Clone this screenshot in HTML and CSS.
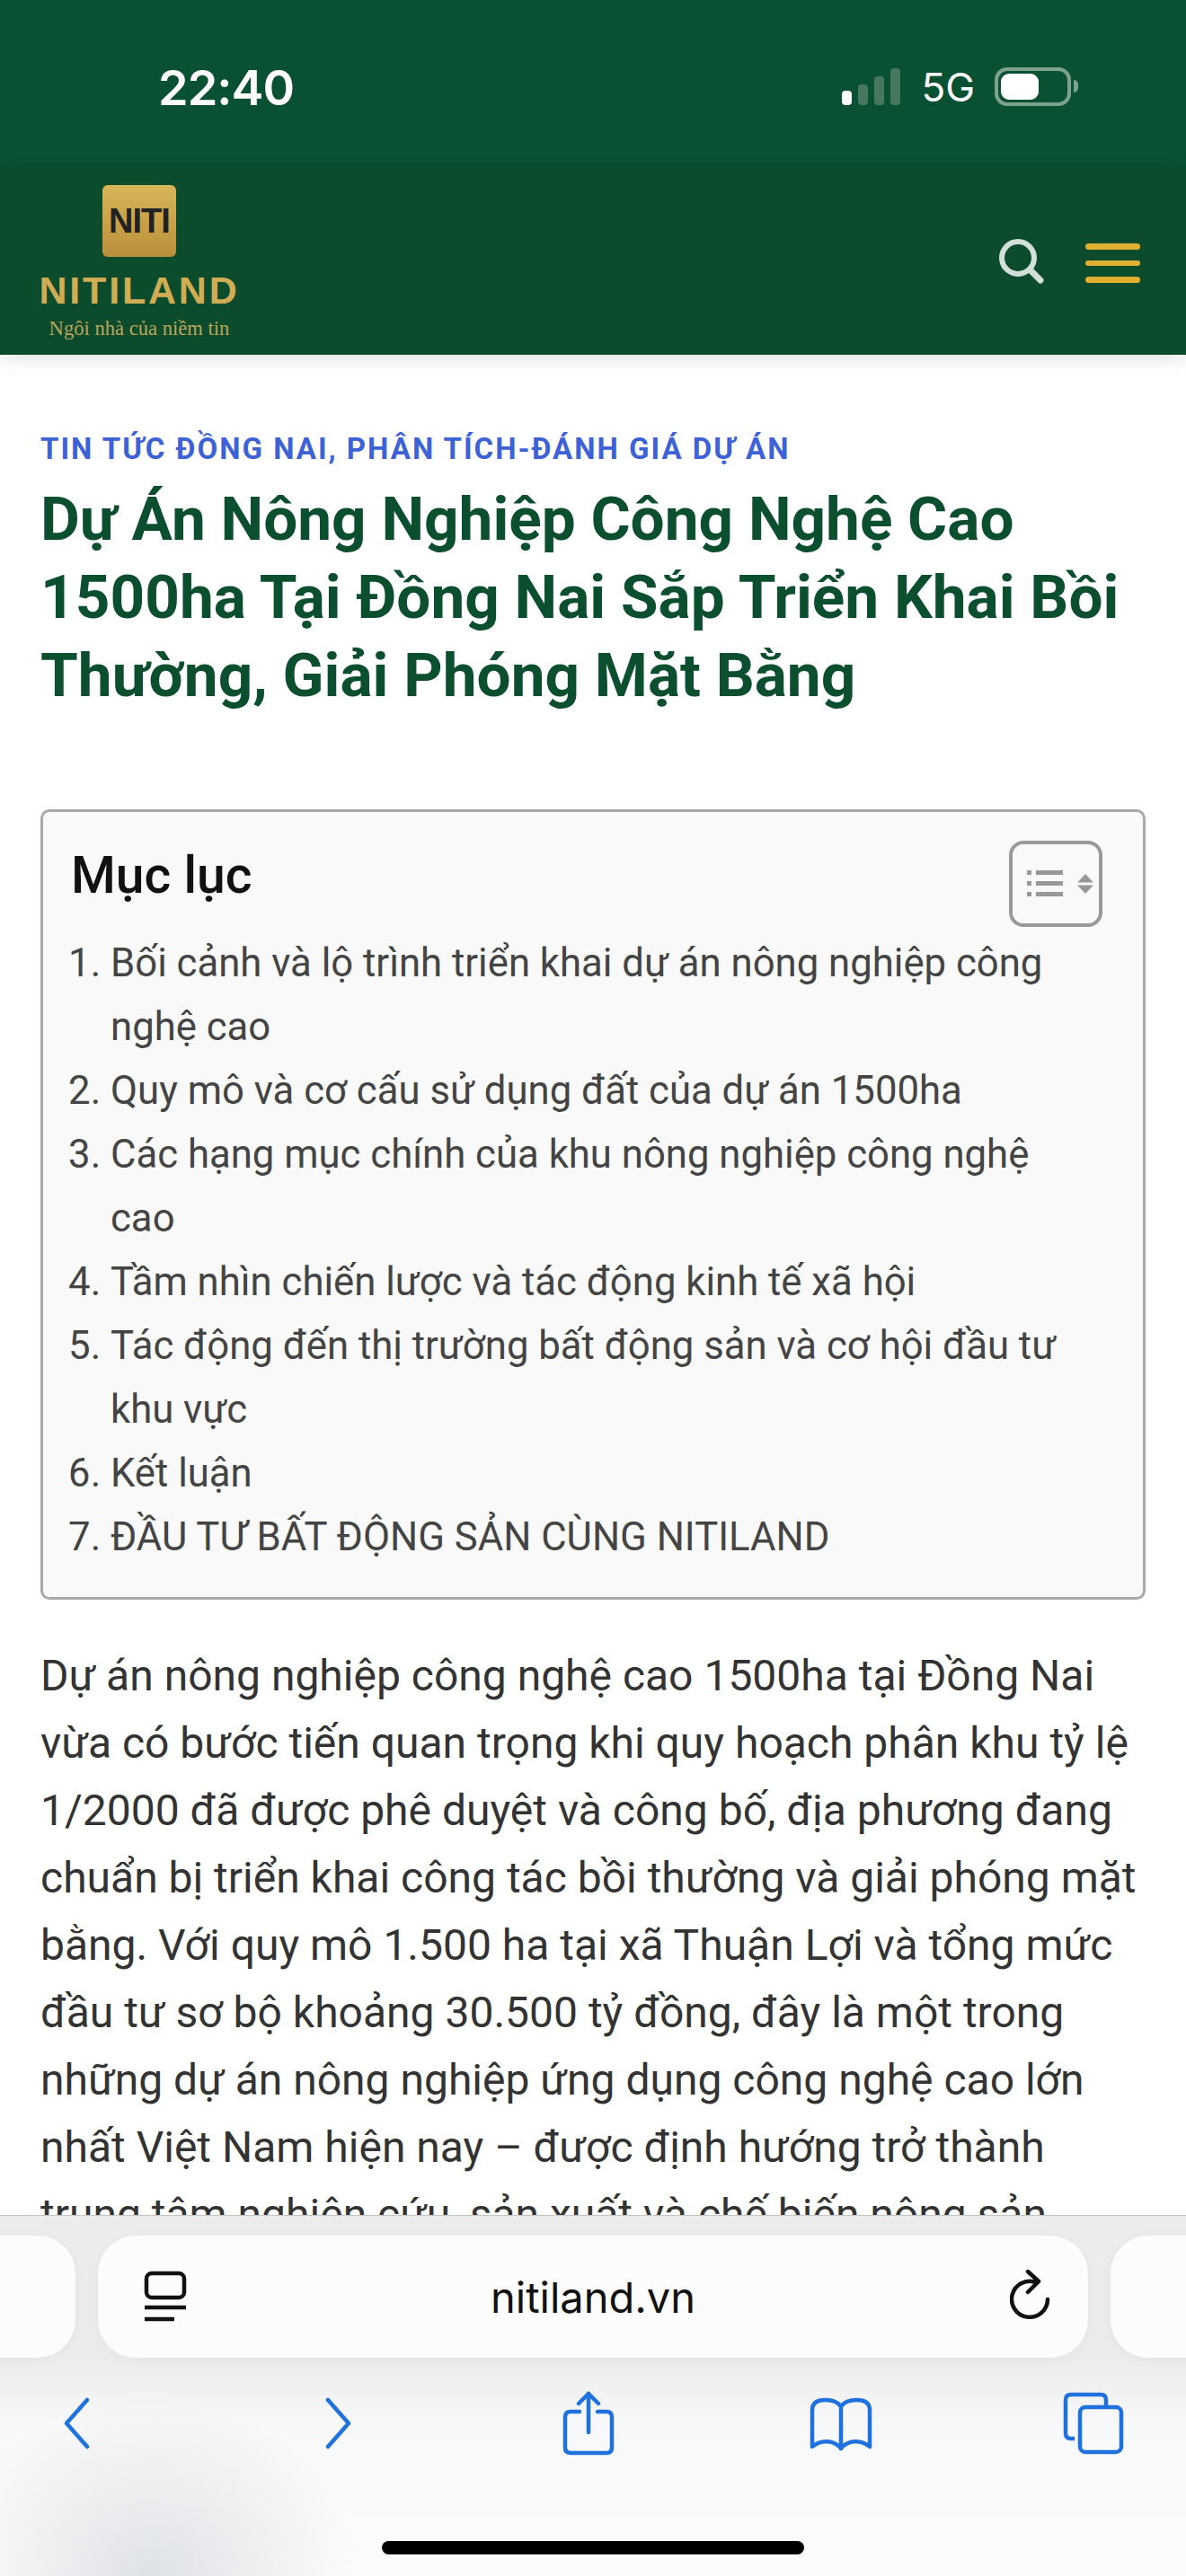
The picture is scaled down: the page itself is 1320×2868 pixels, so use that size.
FILE: index.html
```html
<!DOCTYPE html>
<html lang="vi">
  <head>
    <meta charset="UTF-8" />
    <meta name="viewport" content="width=device-width, initial-scale=1.0" />
    <link rel="stylesheet" href="styles.css">
    <title>Nitiland</title>
  </head>
  <body>
    <div class="screen">
      <div class="status">
        <span class="time">22:40</span>
        <div class="status-right">
          <div class="signal">
            <i class="bar on b1"></i>
            <i class="bar b2"></i>
            <i class="bar b3"></i>
            <i class="bar b4"></i>
          </div>
          <span class="net">5G</span>
          <div class="battery"><i class="level"></i></div>
          <i class="battery-tip"></i>
        </div>
      </div>

      <header class="site-header">
        <div class="logo">
          <div class="logo-box">NITI</div>
          <div class="logo-name">NITILAND</div>
          <div class="logo-tag">Ngôi nhà của niềm tin</div>
        </div>
        <div class="header-icons">
          <svg class="search" width="56" height="56" viewBox="0 0 56 56" fill="none" stroke="#d3e0da" stroke-width="6" stroke-linecap="round">
            <circle cx="24" cy="24" r="18" />
            <path d="M38 38 L49 49" stroke-width="7" />
          </svg>
          <div class="burger">
            <i></i>
            <i></i>
            <i></i>
          </div>
        </div>
      </header>

      <main class="content">
        <div class="cats">TIN TỨC ĐỒNG NAI, PHÂN TÍCH-ĐÁNH GIÁ DỰ ÁN</div>
        <h1 class="title">Dự Án Nông Nghiệp Công Nghệ Cao 1500ha Tại Đồng Nai Sắp Triển Khai Bồi Thường, Giải Phóng Mặt Bằng</h1>

        <div class="toc">
          <div class="toc-head">
            <span class="toc-title">Mục lục</span>
            <button class="toc-toggle">
              <svg width="76" height="32" viewBox="0 0 76 32" fill="#999">
                <rect x="1" y="1" width="5" height="5" />
                <rect x="11" y="1" width="30" height="5" />
                <rect x="1" y="13" width="5" height="5" />
                <rect x="11" y="13" width="30" height="5" />
                <rect x="1" y="25" width="5" height="5" />
                <rect x="11" y="25" width="30" height="5" />
                <path d="M66 5 L75 14.5 H57 Z" />
                <path d="M66 27 L75 17.5 H57 Z" />
              </svg>
            </button>
          </div>
          <ol class="toc-list">
            <li>Bối cảnh và lộ trình triển khai dự án nông nghiệp công nghệ cao</li>
            <li>Quy mô và cơ cấu sử dụng đất của dự án 1500ha</li>
            <li>Các hạng mục chính của khu nông nghiệp công nghệ cao</li>
            <li>Tầm nhìn chiến lược và tác động kinh tế xã hội</li>
            <li>Tác động đến thị trường bất động sản và cơ hội đầu tư khu vực</li>
            <li>Kết luận</li>
            <li>ĐẦU TƯ BẤT ĐỘNG SẢN CÙNG NITILAND</li>
          </ol>
        </div>

        <p class="body-text">Dự án nông nghiệp công nghệ cao 1500ha tại Đồng Nai vừa có bước tiến quan trọng khi quy hoạch phân khu tỷ lệ 1/2000 đã được phê duyệt và công bố, địa phương đang chuẩn bị triển khai công tác bồi thường và giải phóng mặt bằng. Với quy mô 1.500 ha tại xã Thuận Lợi và tổng mức đầu tư sơ bộ khoảng 30.500 tỷ đồng, đây là một trong những dự án nông nghiệp ứng dụng công nghệ cao lớn nhất Việt Nam hiện nay – được định hướng trở thành trung tâm nghiên cứu, sản xuất và chế biến nông sản</p>
      </main>

      <!-- safari toolbar lies over the page -->
      <div class="browser">
        <div class="url-row">
          <div class="pill side"></div>
          <div class="pill url">
            <svg width="50" height="58" viewBox="0 0 50 58" fill="none" stroke="#111" stroke-width="4.5">
              <rect x="4" y="3" width="42" height="27" rx="6" />
              <path d="M2 41 H48" />
              <path d="M2 54 H35" />
            </svg>
            <span class="url-text">nitiland.vn</span>
            <svg width="48" height="60" viewBox="0 0 48 60" fill="none" stroke="#111" stroke-width="4.5" stroke-linecap="round" stroke-linejoin="round">
              <path d="M42 33 A20 20 0 1 1 30 14.5" />
              <path d="M20 2 L32 13 L20 25" />
            </svg>
          </div>
          <div class="pill side"></div>
        </div>
        <div class="tools">
          <svg width="32" height="58" viewBox="0 0 32 58" fill="none" stroke="#1f72de" stroke-width="4.5" stroke-linecap="round" stroke-linejoin="round">
            <path d="M27 3 L4 29 L27 55" />
          </svg>
          <svg class="tool-next" width="32" height="58" viewBox="0 0 32 58" fill="none" stroke="#1f72de" stroke-width="4.5" stroke-linecap="round" stroke-linejoin="round">
            <path d="M5 3 L28 29 L5 55" />
          </svg>
          <svg class="tool-share" width="58" height="72" viewBox="0 0 58 72" fill="none" stroke="#1f72de" stroke-width="4.5" stroke-linecap="round" stroke-linejoin="round">
            <path d="M19 23 H9 Q3 23 3 29 V63 Q3 69 9 69 H49 Q55 69 55 63 V29 Q55 23 49 23 H39" />
            <path d="M29 46 V3" />
            <path d="M18 14 L29 3 L40 14" />
          </svg>
          <svg class="tool-book" width="74" height="62" viewBox="0 0 74 62" fill="none" stroke="#1f72de" stroke-width="4.5" stroke-linecap="round" stroke-linejoin="round">
            <path d="M37 12 C33 7 27 5 20 5 C10 5 5 9 5 16 V57 C15 49 29 49 37 59 C45 49 59 49 69 57 V16 C69 9 64 5 54 5 C47 5 41 7 37 12 Z" />
            <path d="M37 12 V59" />
          </svg>
          <svg class="tool-tabs" width="68" height="70" viewBox="0 0 68 70" fill="none" stroke="#1f72de" stroke-width="4.5" stroke-linejoin="round">
            <path d="M13 52 H9 Q3 52 3 46 V9 Q3 3 9 3 H42 Q48 3 48 9 V16" />
            <rect x="19" y="17" width="46" height="50" rx="6" />
          </svg>
        </div>
        <div class="home-bar"></div>
      </div>
    </div>
  </body>
</html>
```

FILE: styles.css
```css
* {
  margin: 0;
  padding: 0;
  box-sizing: border-box;
}
body {
  font-family: Inter, "Noto Sans", sans-serif;
  background: #fff;
}
.screen {
  position: relative;
  height: 2868px;
  overflow: hidden;
}

/* status bar */
.status {
  height: 186px;
  background: #0a5032;
  color: #fff;
  display: flex;
  justify-content: space-between;
  padding: 68px 120px 0 176px;
}
.time {
  font-size: 54px;
  font-weight: 600;
  line-height: 60px;
  letter-spacing: -1px;
}
.status-right {
  display: flex;
  align-items: flex-start;
  padding-top: 7px;
}
.signal {
  display: flex;
  align-items: flex-end;
  gap: 7px;
  height: 42px;
  margin-right: 23px;
}
.bar {
  width: 11px;
  border-radius: 4px;
  background: #47785f;
}
.bar.on {
  background: #fff;
}
.b1 {
  height: 16px;
}
.b2 {
  height: 23px;
}
.b3 {
  height: 32px;
}
.b4 {
  height: 41px;
}
.net {
  font-size: 44px;
  line-height: 44px;
  margin-right: 22px;
}
.battery {
  width: 85px;
  height: 43px;
  border: 4px solid #7ca28e;
  border-radius: 14px;
  padding: 3px;
}
.level {
  display: block;
  width: 42px;
  height: 29px;
  background: #fff;
  border-radius: 9px;
}
.battery-tip {
  width: 5px;
  height: 14px;
  margin: 14px 0 0 3px;
  background: #7ca28e;
  border-radius: 0 6px 6px 0;
}

/* site header */
.site-header {
  height: 209px;
  background: #0d4b2d;
  display: flex;
  justify-content: space-between;
  align-items: flex-start;
  padding: 20px 51px 0 46px;
  box-shadow: 0 6px 20px rgba(0, 0, 0, 0.1);
}
.logo {
  width: 218px;
  display: flex;
  flex-direction: column;
  align-items: center;
}
.logo-box {
  width: 82px;
  height: 80px;
  border-radius: 6px;
  background: linear-gradient(#d8b658, #b98f3c);
  color: #222;
  font-family: "Liberation Sans", sans-serif;
  font-size: 38px;
  font-weight: 700;
  letter-spacing: -1px;
  line-height: 80px;
  text-align: center;
}
.logo-name {
  margin-top: 17px;
  color: #d0ad54;
  font-family: "Liberation Sans", sans-serif;
  font-size: 43px;
  font-weight: 700;
  line-height: 40px;
  letter-spacing: 2.8px;
  white-space: nowrap;
}
.logo-tag {
  margin-top: 9px;
  color: #b9a65a;
  font-family: "Liberation Serif", serif;
  font-size: 22.6px;
  line-height: 28px;
  white-space: nowrap;
}
.header-icons {
  display: flex;
  align-items: flex-start;
  padding-top: 55px;
}
.search {
  margin-top: 2px;
  margin-right: 43px;
}
.burger {
  width: 61px;
  margin-top: 1px;
  display: flex;
  flex-direction: column;
  gap: 12px;
  padding-top: 9px;
}
.burger i {
  display: block;
  height: 6.5px;
  background: #e0b033;
  border-radius: 4px;
}

/* article */
.content {
  padding: 84px 45px 0;
  font-family: Roboto, "Noto Sans", sans-serif;
}
.cats {
  color: #3d62d6;
  font-size: 33px;
  font-weight: 700;
  line-height: 42px;
  letter-spacing: 2px;
}
.title {
  margin-top: 13px;
  color: #0c4f2f;
  font-size: 67.5px;
  font-weight: 700;
  line-height: 87px;
}
.toc {
  margin-top: 106px;
  height: 880px;
  background: #f9f9f9;
  border: 3px solid #a9a9a9;
  border-radius: 10px;
  padding: 32px 45px 0 31px;
}
.toc-head {
  display: flex;
  justify-content: space-between;
  height: 101px;
}
.toc-title {
  font-size: 57px;
  font-weight: 500;
  line-height: 78px;
  color: #111;
}
.toc-toggle {
  width: 104px;
  height: 96px;
  border: 4px solid #999;
  border-radius: 16px;
  background: transparent;
  display: flex;
  align-items: center;
  padding-left: 15px;
}
.toc-list {
  padding-left: 44px;
  color: #444;
  font-size: 43.7px;
  line-height: 71px;
}
.body-text {
  margin-top: 47px;
  color: #333;
  font-size: 48px;
  line-height: 75px;
}

/* browser toolbar */
.browser {
  position: absolute;
  left: 0;
  right: 0;
  top: 2466px;
  bottom: 0;
  border-top: 1px solid #c4c4c4;
  background:
    radial-gradient(ellipse 230px 200px at 170px 100%, #dfe2e5, rgba(223, 226, 229, 0) 100%),
    linear-gradient(#ececec, #ececec 160px, #f7f8f9 230px, #fbfcfd);
  padding-top: 22px;
}
.url-row {
  display: flex;
  gap: 25px;
  margin: 0 -400px;
}
.pill {
  height: 136px;
  background: #fcfcfc;
  border-radius: 42px;
  box-shadow: 0 2px 14px rgba(0, 0, 0, 0.04);
}
.side {
  flex: 1;
}
.url {
  width: 1102px;
  flex: none;
  display: flex;
  align-items: center;
  justify-content: space-between;
  padding: 0 39px 0 50px;
}
.url-text {
  font-size: 47px;
  color: #111;
  margin-right: 13px;
}
.tools {
  margin-top: 38px;
  padding-left: 70px;
  display: flex;
  align-items: center;
  height: 70px;
}
.tool-next {
  margin-left: 258px;
}
.tool-share {
  margin-left: 234px;
}
.tool-book {
  margin-left: 215px;
}
.tool-tabs {
  margin-left: 210px;
}
.home-bar {
  position: absolute;
  left: 425px;
  width: 470px;
  height: 15px;
  bottom: 24px;
  background: #000;
  border-radius: 8px;
}
```
